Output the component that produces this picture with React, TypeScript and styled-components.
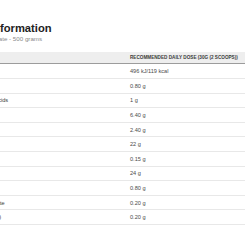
import React from "react";
import styled, { createGlobalStyle } from "styled-components";

const Global = createGlobalStyle`
  html, body {
    margin: 0;
    padding: 0;
    background: #ffffff;
    overflow: hidden;
  }
  body {
    font-family: "Liberation Sans", Arial, sans-serif;
  }
`;

const Page = styled.main`
  margin-left: -69px;
  padding-top: 21.6px;
  width: 314px;
`;

const Title = styled.h1`
  margin: 0;
  font-size: 11.2px;
  line-height: 13px;
  font-weight: 700;
  color: #222222;
`;

const Subtitle = styled.p`
  margin: 0.2px 0 9.2px;
  font-size: 6.2px;
  line-height: 8px;
  color: #8a8a8a;
`;

const Table = styled.table`
  width: 314px;
  border-collapse: collapse;
  table-layout: fixed;
`;

const HeadCell = styled.th<{ $w?: number }>`
  box-sizing: border-box;
  width: ${(p) => (p.$w ? `${p.$w}px` : "auto")};
  height: 12px;
  padding: 0 0 0 5px;
  background: #eeeeee;
  border-bottom: 1.3px solid #9c9c9c;
  text-align: left;
  font-size: 4.65px;
  font-weight: 700;
  text-transform: uppercase;
  color: #3a3a3a;
  white-space: nowrap;
`;

const Row = styled.tr`
  border-bottom: 1px solid #e8e8e8;
`;

const Cell = styled.td<{ $label?: boolean }>`
  height: 13.6px;
  padding: 0 0 0 5px;
  font-size: 5.6px;
  color: ${(p) => (p.$label ? "#3c3c3c" : "#4a4a4a")};
  white-space: nowrap;
  vertical-align: middle;
`;

const rows: [string, string][] = [
  ["Energy", "496 kJ/119 kcal"],
  ["Fat", "0.80 g"],
  ["of which saturated fatty acids", "1 g"],
  ["Carbohydrates", "6.40 g"],
  ["of which sugars", "2.40 g"],
  ["Protein", "22 g"],
  ["Salt", "0.15 g"],
  ["Essential amino acids", "24 g"],
  ["Glutamine", "0.80 g"],
  ["Pure Creatine Monohydrate", "0.20 g"],
  ["Vitamin B6 (as pyridoxine)", "0.20 g"],
];

export default function App() {
  return (
    <>
      <Global />
      <Page>
        <Title>Nutritional Information</Title>
        <Subtitle>Native Whey Protein Isolate - 500 grams</Subtitle>
        <Table>
          <thead>
            <tr>
              <HeadCell $w={194}>Nutrient</HeadCell>
              <HeadCell>Recommended daily dose (30g (2 scoops))</HeadCell>
            </tr>
          </thead>
          <tbody>
            {rows.map(([label, value]) => (
              <Row key={label}>
                <Cell $label>{label}</Cell>
                <Cell>{value}</Cell>
              </Row>
            ))}
          </tbody>
        </Table>
      </Page>
    </>
  );
}
